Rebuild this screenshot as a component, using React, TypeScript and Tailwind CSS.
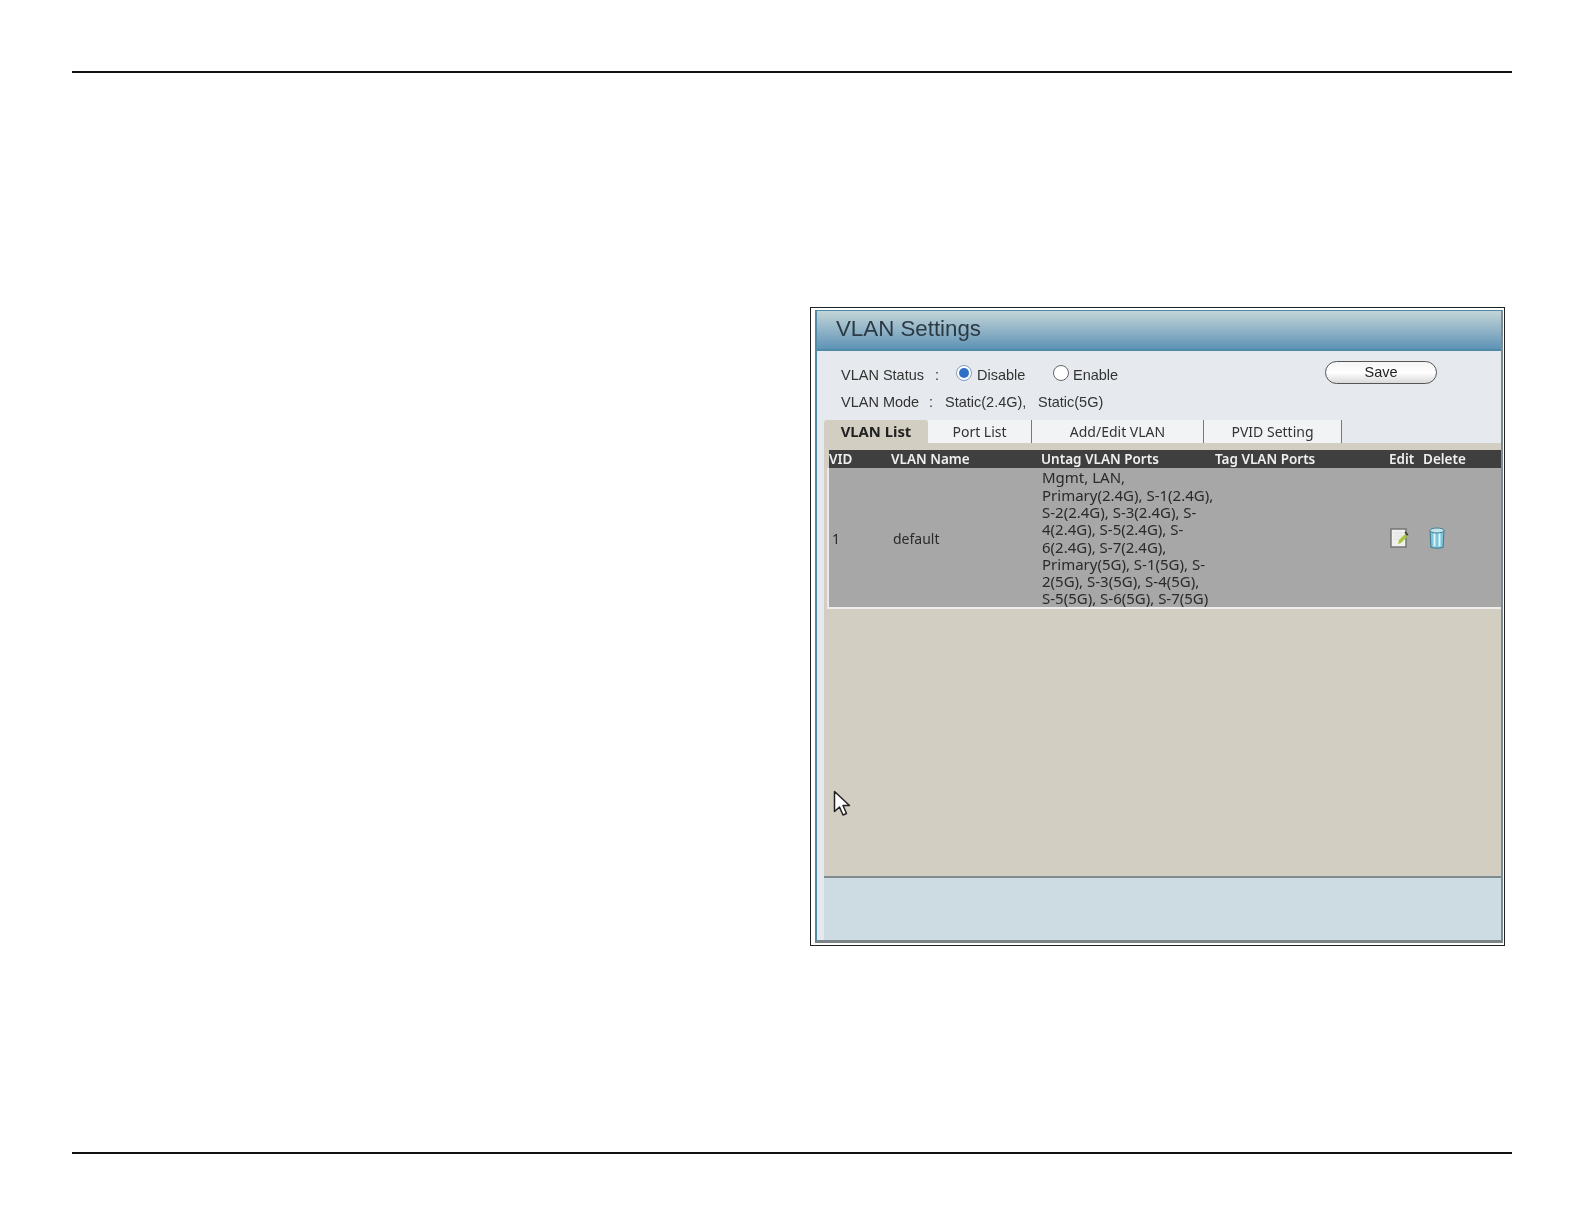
const portLines = [
  "Mgmt, LAN,",
  "Primary(2.4G), S-1(2.4G),",
  "S-2(2.4G), S-3(2.4G), S-",
  "4(2.4G), S-5(2.4G), S-",
  "6(2.4G), S-7(2.4G),",
  "Primary(5G), S-1(5G), S-",
  "2(5G), S-3(5G), S-4(5G),",
  "S-5(5G), S-6(5G), S-7(5G)",
];

const tabs = [
  { label: "Port List", width: "w-[104px]" },
  { label: "Add/Edit VLAN", width: "w-[172px]" },
  { label: "PVID Setting", width: "w-[138px]" },
];

function EditIcon() {
  return (
    <svg width="20" height="20" viewBox="0 0 20 20">
      <rect x="1" y="1" width="15" height="18" fill="#f0f0ee" stroke="#6f6f6f" strokeWidth="1.4" />
      <path d="M4 5h9M4 8h9M4 11h6" stroke="#dcdcdc" />
      <path d="M8 16l1-4 6-6 2 3-6 6z" fill="#a8c83c" />
      <path d="M15 4l3 3" stroke="#333" strokeWidth="1.500" />
    </svg>
  );
}

function TrashIcon() {
  return (
    <svg width="18" height="22" viewBox="0 0 18 22">
      <path d="M2 3.500h14l-1 17q-6 1.500-12 0z" fill="#7cc6de" stroke="#3c7a92" />
      <ellipse cx="9" cy="3.500" rx="7" ry="2.500" fill="#c4e4ea" stroke="#3f7f96" />
      <path d="M6.500 6.500v13M11.500 6.500v13" stroke="#e6f4f8" strokeWidth="1.800" />
    </svg>
  );
}

function CursorIcon() {
  return (
    <svg width="18" height="27" viewBox="0 0 18 27">
      <path d="M1.500 1.500v20l5-4.500 3.500 8 3.500-1.500-3.500-8h6.500z" fill="#fff" stroke="#222" strokeWidth="1.500" strokeLinejoin="round" />
    </svg>
  );
}

export default function App() {
  return (
    <div className="w-[1584px] h-[1224px] bg-white flex flex-col pt-[71px] pb-[70px] px-[72px]">
      <div className="h-[2px] bg-[#111]" />

      <section className="mt-[234px] flex justify-end pr-[7px]">
        <div className="w-[695px] h-[639px] border border-[#222] pt-[2px] pb-[2px] pl-[4px] pr-[1px] bg-white flex flex-col font-['Liberation_Sans',sans-serif] text-[#333] blur-[0.35px]">
          <div className="flex-1 flex flex-col border-l-2 border-t border-[#4f8aa6] border-r-2 border-r-[#7d8a90] border-b-[3px] border-b-[#7d8488] bg-[#e6eaee] min-h-0">
            <div className="h-[40px] shrink-0 bg-gradient-to-b from-[#c3d5d8] to-[#5e93b5] border-b-2 border-[#4f8aa6] pl-[19px] pb-[1px] flex items-center">
              <h1 className="text-[22.300px] text-[#2c3a44] leading-none">VLAN Settings</h1>
            </div>

            <div className="flex-1 flex flex-col min-h-0 pl-[7px]">
              <div className="h-[69px] shrink-0 relative pl-[17px] text-[14.500px]">
                <div className="flex items-center h-[24px] mt-[13px]">
                  <span className="w-[94px]">VLAN Status</span>
                  <span className="w-[21px]">:</span>
                  <span className="w-[16px] h-[16px] mb-[6px] rounded-full border border-[#7f9cc4] bg-white flex items-center justify-center">
                    <span className="w-[10px] h-[10px] rounded-full bg-[#2f6fc6]" />
                  </span>
                  <span className="ml-[5px] w-[76px]">Disable</span>
                  <span className="w-[16px] h-[16px] mb-[6px] rounded-full border border-[#666] bg-white" />
                  <span className="ml-[4px]">Enable</span>
                </div>
                <div className="flex items-center h-[24px] mt-[3px]">
                  <span className="w-[88px]">VLAN Mode</span>
                  <span className="w-[16px]">:</span>
                  <span className="w-[93px]">Static(2.4G),</span>
                  <span>Static(5G)</span>
                </div>
                <button className="absolute top-[10px] left-[501px] w-[112px] h-[23px] rounded-full border border-[#555] bg-gradient-to-b from-[#f4f4f4] via-[#fff] to-[#dadada] text-[14.500px] leading-none text-[#222]">
                  Save
                </button>
              </div>

              <div className="flex h-[23px] shrink-0 font-['Noto_Sans',sans-serif] text-[14px] text-[#333]">
                <div className="w-[104px] bg-[#d3cec2] rounded-t-[3px] font-bold text-[14.800px] text-[#222] flex items-center justify-center">
                  VLAN List
                </div>
                {tabs.map((tab) => (
                  <div
                    key={tab.label}
                    className={`${tab.width} bg-[#f2f3f4] border-r border-[#777] flex items-center justify-center`}
                  >
                    {tab.label}
                  </div>
                ))}
              </div>

              <div className="flex-1 flex flex-col min-h-0 font-['Noto_Sans',sans-serif] text-[15px]">
                <div className="pt-[7px] bg-[#d3cec2] flex flex-col flex-1">
                  <div className="ml-[5px] h-[18px] pt-[2px] bg-[#3f3f3f] text-[#f0f0f0] text-[13.500px] flex items-center font-semibold leading-none">
                    <span className="w-[62px]">VID</span>
                    <span className="w-[150px]">VLAN Name</span>
                    <span className="w-[174px]">Untag VLAN Ports</span>
                    <span className="w-[174px]">Tag VLAN Ports</span>
                    <span className="w-[34px]">Edit</span>
                    <span>Delete</span>
                  </div>
                  <div className="ml-[3px] h-[141px] bg-[#a7a7a7] border-l-2 border-[#e8ecee] border-b-2 border-b-[#eeeeea] flex items-center text-[#2a2a2a]">
                    <span className="w-[64px] pl-[3px] pt-[2px] text-[14px]">1</span>
                    <span className="w-[149px] pt-[2px] text-[14px]">default</span>
                    <div className="w-[348px] pt-[2px] leading-[17.300px]">
                      {portLines.map((line) => (
                        <div key={line}>{line}</div>
                      ))}
                    </div>
                    <EditIcon />
                    <span className="ml-[18px]">
                      <TrashIcon />
                    </span>
                  </div>
                  <div className="flex-1 relative">
                    <span className="absolute left-[9px] top-[181px]">
                      <CursorIcon />
                    </span>
                  </div>
                </div>
                <div className="h-[64px] shrink-0 bg-[#cddce3] border-t-2 border-[#7f8a8c]" />
              </div>
            </div>
          </div>
        </div>
      </section>

      <div className="mt-auto h-[2px] bg-[#111]" />
    </div>
  );
}
